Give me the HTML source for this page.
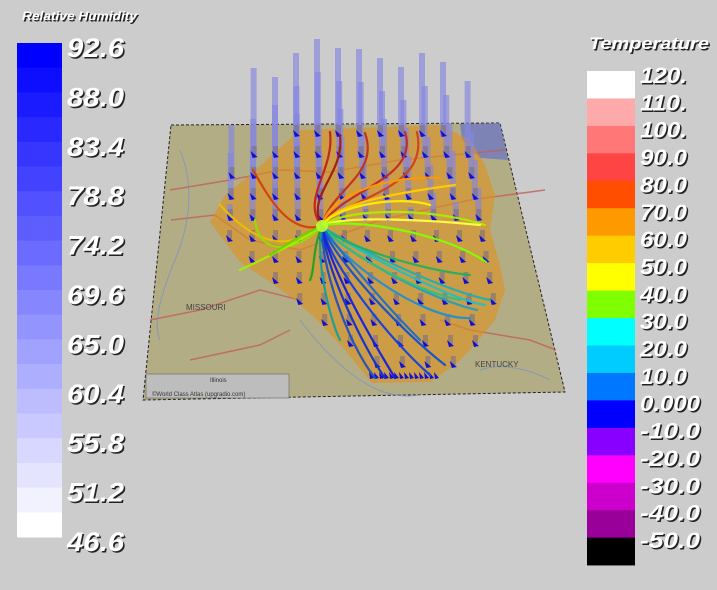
<!DOCTYPE html>
<html><head><meta charset="utf-8"><style>
html,body{margin:0;padding:0;background:#cccccc;width:717px;height:590px;overflow:hidden}
svg{display:block}
.t{font-family:"Liberation Sans",sans-serif;font-style:italic;font-weight:bold}
</style></head><body>
<svg id="s" width="717" height="590" viewBox="0 0 717 590" xmlns="http://www.w3.org/2000/svg">
<rect width="717" height="590" fill="#cccccc"/>
<g id="leg"></g>
<polygon points="171,125 500,123 565,392 143,400" fill="#b3ad86" stroke="#222" stroke-width="1" stroke-dasharray="3,2"/>
<polygon points="460,124 500,123 508,160 480,158 462,140" fill="#6f79c0" opacity="0.8"/>
<g stroke="#c0605a" stroke-width="1.5" fill="none" opacity="0.8">
<path d="M171,220 L215,215 L250,240 L300,250 L380,220 L470,200 L545,190"/>
<path d="M150,320 L200,310 L260,290 L300,300"/>
<path d="M170,190 L230,180 L280,170 L330,172 L400,160 L505,150"/>
<path d="M190,360 L260,345 L290,330"/>
<path d="M440,320 L470,330 L530,340 L556,350"/>
</g>
<g stroke="#6f92c8" stroke-width="1" fill="none" opacity="0.7">
<path d="M180,150 Q200,200 175,260 T160,340"/>
<path d="M300,320 Q330,360 360,380 T420,395"/>
<path d="M480,370 Q510,360 550,380"/>
</g>
<rect x="146" y="374" width="143" height="24" fill="#bdbdbd" stroke="#555" stroke-width="0.5"/>
<text x="210" y="382" font-size="6" font-family="Liberation Sans" fill="#333">Illinois</text>
<text x="152" y="396" font-size="6" font-family="Liberation Sans" fill="#333">©World Class Atlas (upgradio.com)</text>
<text x="186" y="310" font-size="8" font-family="Liberation Sans" fill="#444">MISSOURI</text>
<text x="475" y="367" font-size="8" font-family="Liberation Sans" fill="#444">KENTUCKY</text>
<polygon points="300,130 440,125 470,140 485,165 495,195 490,230 500,265 505,290 495,320 470,350 455,365 430,382 372,383 345,350 315,318 295,300 270,282 240,262 210,222 225,195 250,175" fill="#dc9220" opacity="0.62"/>
<g id="bars"></g>
<g id="arr"></g>
<g id="stream" fill="none" stroke-linecap="round"></g>
<circle cx="322" cy="226" r="6" fill="#b8ff30" opacity="0.9"/>
</svg>
<script>
const NS="http://www.w3.org/2000/svg";
function el(p,t,a,txt){const e=document.createElementNS(NS,t);for(const k in a)e.setAttribute(k,a[k]);if(txt!==undefined)e.textContent=txt;p.appendChild(e);return e;}
const leg=document.getElementById('leg');
for(let i=0;i<20;i++){const f=i/19;const c=Math.round(255*f);
 el(leg,'rect',{x:17,y:43+i*24.7,width:45,height:25.2,fill:`rgb(${c},${c},255)`});}
function lbl(x,y,s,fs,tl){const a={x:x+1.5,y:y+1.5,'font-size':fs,fill:'#222',class:'t'};if(tl){a.textLength=tl;a.lengthAdjust='spacingAndGlyphs';}
 el(leg,'text',a,s);const b=Object.assign({},a,{x:x,y:y,fill:'#fff'});el(leg,'text',b,s);}
lbl(22,20,'Relative Humidity',12,115);
const lv=['92.6','88.0','83.4','78.8','74.2','69.6','65.0','60.4','55.8','51.2','46.6'];
lv.forEach((v,i)=>lbl(67,57+i*49.4,v,27,57));
const rc=['#ffffff','#ffaaaa','#ff7777','#ff4444','#ff4e00','#ff9900','#ffcc00','#ffff00','#80ff00','#00ffff','#00ccff','#0077ff','#0000ff','#8800ff','#ff00ff','#cc00cc','#990099','#000000'];
rc.forEach((c,i)=>el(leg,'rect',{x:587,y:71+i*27.45,width:48,height:27.8,fill:c}));
lbl(589,49,'Temperature',17,120);
const rv=['120.','110.','100.','90.0','80.0','70.0','60.0','50.0','40.0','30.0','20.0','10.0','0.000','-10.0','-20.0','-30.0','-40.0','-50.0'];
rv.forEach((v,i)=>lbl(640,83+i*27.35,v,22,v.length>4?60:47));
const poly=[[300,130],[440,125],[470,140],[485,165],[495,195],[490,230],[500,265],[505,290],[495,320],[470,350],[455,365],[430,382],[372,383],[345,350],[315,318],[295,300],[270,282],[240,262],[210,222],[225,195],[250,175]];
function inside(x,y){let c=false;for(let i=0,j=poly.length-1;i<poly.length;j=i++){const[xi,yi]=poly[i],[xj,yj]=poly[j];if(((yi>y)!=(yj>y))&&(x<(xj-xi)*(y-yi)/(yj-yi)+xi))c=!c;}return c;}
const bars=document.getElementById('bars'),arr=document.getElementById('arr');
let rows=[];
for(let r=0;r<12;r++){const y=133+r*21;const sp=21+r*0.4;const sh=-(r*2);for(let k=0;k<20;k++){const x=170+sh+k*sp;if(inside(x,y)||(r<4&&x>205&&x<470&&y<220&&inside(x+10,y+10)))rows.push([x,y,r]);}}
rows.forEach(([x,y,r],i)=>{
 let h=0;if(r<5){h=Math.max(0,(70-r*14)+((i*37)%23)-5+(x>250&&x<350?15:0));}
 if(h>3)el(bars,'rect',{x:x-3,y:y-h,width:6,height:h+4,fill:'#8585e0',opacity:0.65});
 el(arr,'rect',{x:x-2,y:y-8,width:5,height:9,fill:'#7a6f80',opacity:0.6});
 el(arr,'polygon',{points:`${x-3},${y-3} ${x+4},${y+3} ${x-1},${y+4}`,fill:'#1010d0'});
});
for(let k=0;k<14;k++){const x=371+k*5;el(arr,'polygon',{points:`${x-2},372 ${x+3},378 ${x-1},379`,fill:'#1010d0'});}
const st=document.getElementById('stream');
const lines=[
 ['M322,226 C300,200 335,170 330,132','#c02020'],['M322,226 C305,195 345,175 340,135','#a01818'],
 ['M322,226 C330,190 380,175 365,133','#c03020'],['M322,226 C340,190 420,180 405,132','#c02828'],
 ['M322,226 C350,195 430,190 417,132','#d04020'],
 ['M322,226 C330,190 400,175 440,178','#ff9900'],['M322,226 C335,200 420,190 455,185','#ffcc00'],
 ['M322,226 C335,205 400,195 430,205','#ffee00'],['M322,226 C340,210 420,205 485,225','#aaee00'],
 ['M322,226 C340,215 430,220 480,225','#ffff40'],['M322,226 C345,218 440,230 486,262','#80ff00'],
 ['M322,226 C300,240 270,260 220,205','#e8c000'],['M322,226 C300,250 260,260 255,220','#90e000'],
 ['M322,226 C295,245 250,265 240,270','#a0f000'],['M322,226 C290,235 270,200 253,170','#d04010'],
 ['M322,226 C290,240 280,250 270,255','#70d000'],
 ['M322,226 C340,240 440,290 490,300','#20b0b0'],['M322,226 C345,245 450,300 485,305','#20c0c0'],
 ['M322,226 C340,250 430,300 477,310','#1ea0c0'],['M322,226 C335,255 420,320 470,318','#2090d0'],
 ['M322,226 C335,260 400,330 445,365','#1050d0'],['M322,226 C330,265 390,340 430,375','#1040e0'],
 ['M322,226 C330,270 375,345 395,378','#1020e0'],['M322,226 C325,270 365,350 385,378','#1030d0'],
 ['M322,226 C320,260 345,340 375,378','#2050c0'],['M322,226 C315,260 330,320 340,340','#10a0a0'],
 ['M322,226 C312,250 315,270 310,280','#20a020'],['M322,226 C340,245 420,270 470,275','#20b060'],
 ['M322,226 C340,248 410,290 460,300','#30c080'],['M322,226 C335,245 380,300 420,340','#1a70d0']
];
lines.forEach(([d,c])=>el(st,'path',{d:d,stroke:c,'stroke-width':2.2,opacity:0.95}));
</script>
</body></html>
